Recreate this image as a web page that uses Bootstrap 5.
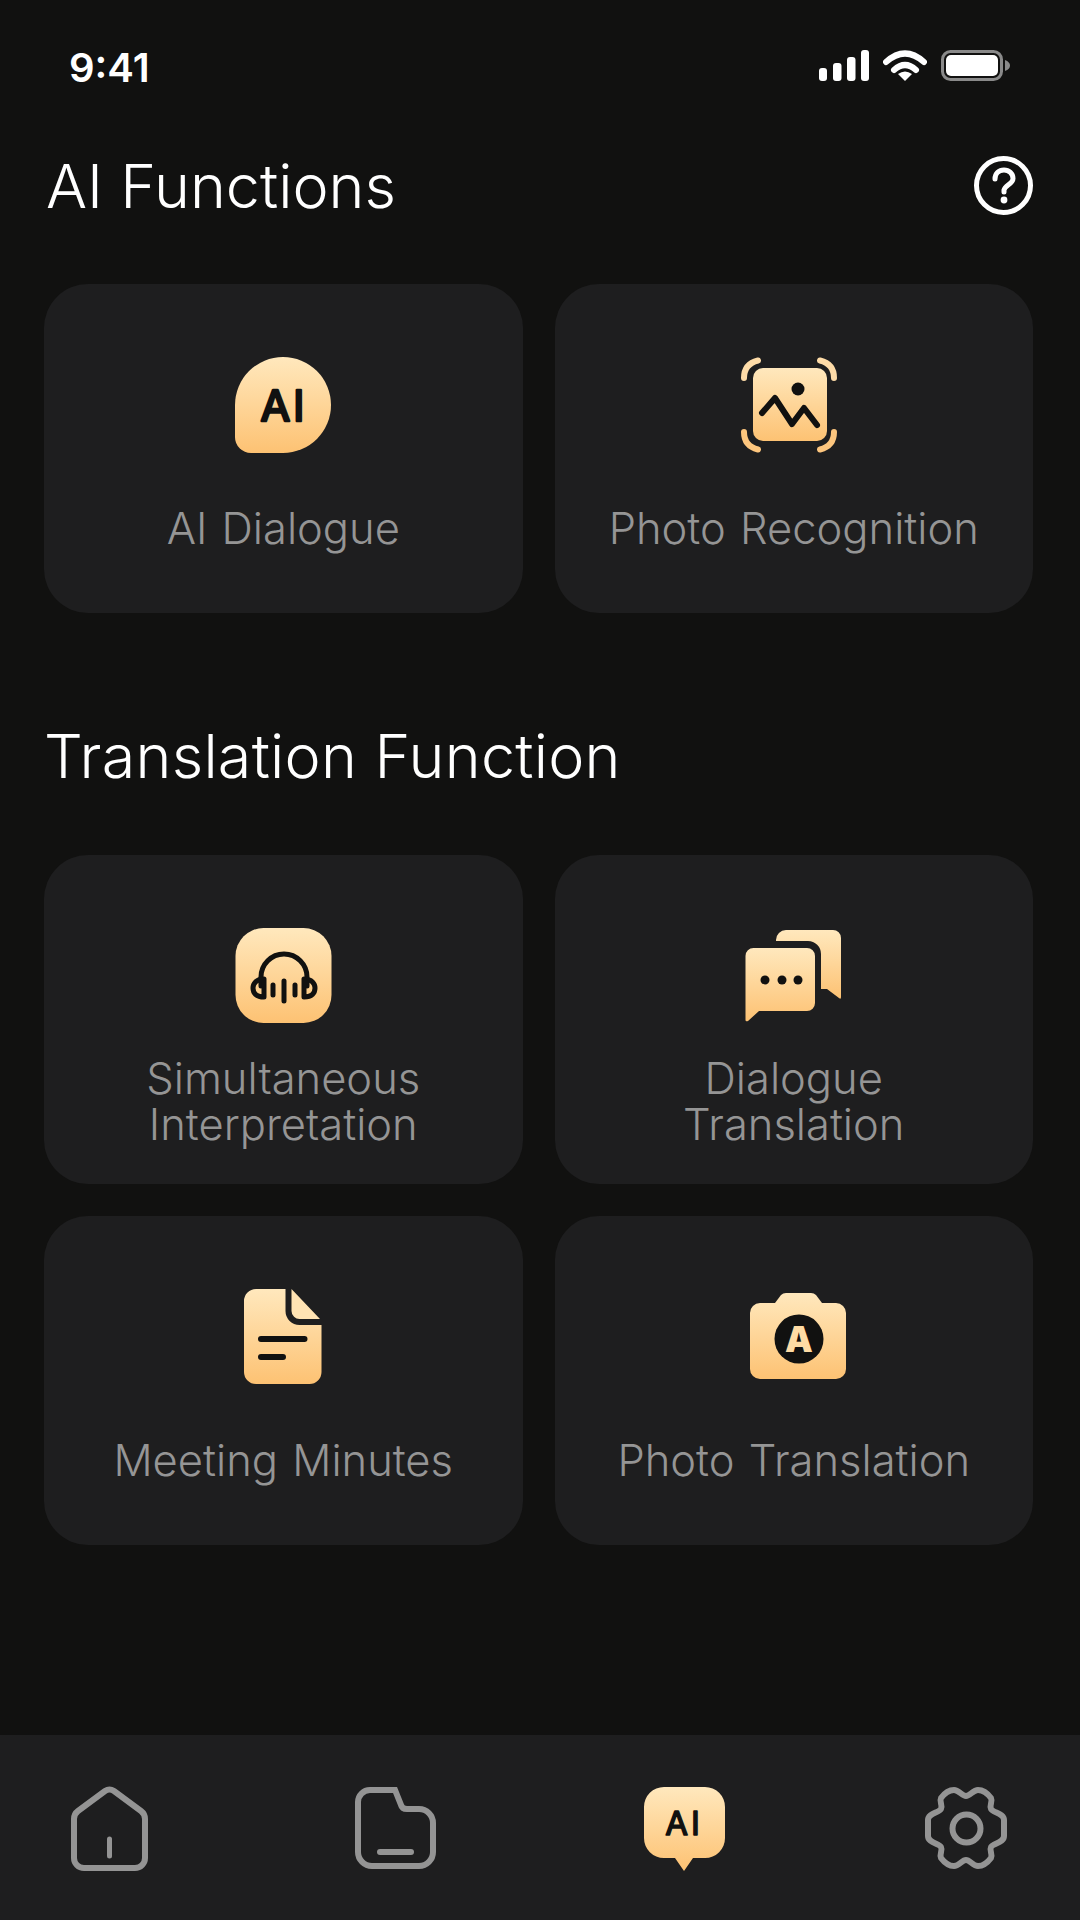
<!DOCTYPE html>
<html lang="en">
<head>
  <meta charset="UTF-8">
  <title>AI Functions</title>
  <link rel="stylesheet" href="https://cdn.jsdelivr.net/npm/bootstrap@5.3.0/dist/css/bootstrap.min.css">
  <style>
    body { background: #111110; font-family: Inter, "Liberation Sans", sans-serif; }
    .screen { width: 1080px; height: 1920px; background: #111110; overflow: hidden; }
    .status-row { padding: 50px 70px 0 69px; height: 131px; color: #fff; }
    .clock { font-size: 40px; font-weight: 600; line-height: 32px; margin-top: 2px; }
    .status-icons { gap: 14px; }
    .main-area { padding: 25px 47px 0 44px; }
    .page-head { height: 59px; padding-left: 2px; }
    .head-text { font-size: 61px; font-weight: 350; line-height: 60px; color: #fff; margin: 0; }
    .section-head { margin-top: 113px; padding-left: 0; }
    .section-head .head-text { letter-spacing: .25px; }
    .fn-grid { display: grid; grid-template-columns: 1fr 1fr; gap: 32px; margin-top: 70px; }
    .fn-grid.first-grid { margin-top: 69px; }
    .fn-card { height: 329px; background: #1e1e1f; border-radius: 44px; padding: 73px 0 10px; }
    .fn-icon { width: 120px; height: 96px; display: block; }
    .fn-label { font-size: 43.5px; line-height: 46px; word-spacing: 2px; font-weight: 350; color: #959595; text-align: center; }
    .tab-row { height: 185px; background: #1e1e1f; padding: 51px 54px 0 50px; }
    .tab-icon { width: 120px; height: 88px; display: block; }
    .ai-mark { font-family: Inter, "Liberation Sans", sans-serif; font-weight: 400; fill: #111110; stroke: #111110; stroke-linejoin: round; letter-spacing: 3px; }
  </style>
</head>
<body>
  <div class="screen d-flex flex-column">
    <div class="status-row d-flex justify-content-between align-items-start flex-shrink-0">
      <div class="clock">9:41</div>
      <div class="status-icons d-flex">
        <svg width="50" height="31" viewBox="0 0 50 31" fill="#fff">
          <rect x="0" y="18" width="8" height="13" rx="3"/>
          <rect x="14" y="13" width="8.5" height="18" rx="3"/>
          <rect x="28" y="7" width="8.5" height="24" rx="3"/>
          <rect x="42" y="0" width="8" height="31" rx="3"/>
        </svg>
        <svg width="44" height="31" viewBox="0 0 44 31" fill="none">
          <path d="M3 12 Q22 -5 41 12" stroke="#fff" stroke-width="6" stroke-linecap="round"/>
          <path d="M11 20 Q22 10 33 20" stroke="#fff" stroke-width="6" stroke-linecap="round"/>
          <path d="M15 24 Q22 19 29 24 L22 31 Z" fill="#fff"/>
        </svg>
        <svg width="69" height="31" viewBox="0 0 69 31" fill="none">
          <rect x="1.5" y="1.5" width="59" height="28" rx="8" stroke="#8a8a8a" stroke-width="3"/>
          <rect x="5" y="5" width="52" height="21" rx="5" fill="#fff"/>
          <path d="M64 10 Q69 12 69 15.5 Q69 19 64 21 Z" fill="#8a8a8a"/>
        </svg>
      </div>
    </div>

    <div class="main-area flex-grow-1">
      <div class="page-head d-flex justify-content-between align-items-center">
        <h1 class="head-text">AI Functions</h1>
        <svg width="59" height="59" viewBox="0 0 59 59" fill="none">
          <circle cx="29.5" cy="29.5" r="27" stroke="#fff" stroke-width="5"/>
          <path d="M21 23 C21 17 25 14 30 14 C35 14 39 17.500 39 22.500 C39 28 31 29 30 34 V36" stroke="#fff" stroke-width="5" stroke-linecap="round"/>
          <circle cx="30" cy="44" r="3.400" fill="#fff"/>
        </svg>
      </div>

      <div class="fn-grid first-grid">
        <div class="fn-card d-flex flex-column align-items-center">
          <svg class="fn-icon" viewBox="0 0 120 96">
            <defs><linearGradient id="g1" x1="0" y1="0" x2="0" y2="1"><stop offset="0" stop-color="#ffe8bd"/><stop offset="1" stop-color="#fdc273"/></linearGradient></defs>
            <path d="M12 48 A48 48 0 1 1 60 96 H28 A16 16 0 0 1 12 80 Z" fill="url(#g1)"/>
            <text class="ai-mark" x="61" y="64" font-size="43" stroke-width="2.500" text-anchor="middle">AI</text>
          </svg>
          <div class="fn-label flex-grow-1 d-flex align-items-center">AI Dialogue</div>
        </div>
        <div class="fn-card d-flex flex-column align-items-center">
          <svg class="fn-icon" viewBox="0 0 120 96" fill="none">
            <defs><linearGradient id="g2" x1="0" y1="0" x2="0" y2="1"><stop offset="0" stop-color="#ffe8bd"/><stop offset="1" stop-color="#fdc273"/></linearGradient></defs>
            <rect x="19" y="11" width="74" height="73" rx="10" fill="url(#g2)"/>
            <path d="M10 21 Q10 7 24 3.500 M86 3.500 Q100 7 100 21" stroke="#fedca8" stroke-width="6" stroke-linecap="round"/>
            <path d="M10 75 Q10 89 24 92.500 M86 92.500 Q100 89 100 75" stroke="#fdc67e" stroke-width="6" stroke-linecap="round"/>
            <circle cx="64" cy="32" r="6.500" fill="#111110"/>
            <path d="M28 56 L41 41 L58 67 L70 51 L83 68" stroke="#111110" stroke-width="6" stroke-linecap="round" stroke-linejoin="round"/>
          </svg>
          <div class="fn-label flex-grow-1 d-flex align-items-center">Photo Recognition</div>
        </div>
      </div>

      <div class="page-head section-head d-flex align-items-center">
        <h2 class="head-text">Translation Function</h2>
      </div>

      <div class="fn-grid">
        <div class="fn-card d-flex flex-column align-items-center">
          <svg class="fn-icon" viewBox="0 0 120 96" fill="none">
            <defs><linearGradient id="g3" x1="0" y1="0" x2="0" y2="1"><stop offset="0" stop-color="#ffe8bd"/><stop offset="1" stop-color="#fdc273"/></linearGradient></defs>
            <rect x="12.500" y="0" width="96" height="95" rx="28" fill="url(#g3)"/>
            <g stroke="#111110" stroke-width="5" stroke-linecap="round" stroke-linejoin="round">
              <path d="M38 58 V49 A23 23 0 0 1 84 49 V58"/>
              <path d="M41 51 C33 51 30 56 30 60 C30 65 33 69 41 69 Z"/>
              <path d="M81 51 C89 51 92 56 92 60 C92 65 89 69 81 69 Z"/>
              <path d="M50 57 V67 M61 53 V73 M72 57 V67"/>
            </g>
          </svg>
          <div class="fn-label flex-grow-1 d-flex align-items-center pt-1">Simultaneous<br>Interpretation</div>
        </div>
        <div class="fn-card d-flex flex-column align-items-center">
          <svg class="fn-icon" viewBox="0 0 120 96">
            <defs><linearGradient id="g4" x1="0" y1="0" x2="0" y2="1"><stop offset="0" stop-color="#ffe8bd"/><stop offset="1" stop-color="#fdc273"/></linearGradient></defs>
            <path d="M42 13 V12 A10 10 0 0 1 52 2 H99 A8 8 0 0 1 107 10 V69 Q107 72 105 70 L93 61 H87 V26 A13 13 0 0 0 74 13 Z" fill="url(#g4)"/>
            <path d="M11.500 28 A8 8 0 0 1 19.500 20 H73 A8 8 0 0 1 81 28 V75 A8 8 0 0 1 73 83 H25 L14 93 Q11.500 94 11.500 92 Z" fill="url(#g4)"/>
            <circle cx="31" cy="52" r="4.500" fill="#111110"/>
            <circle cx="48" cy="52" r="4.500" fill="#111110"/>
            <circle cx="64" cy="52" r="4.500" fill="#111110"/>
          </svg>
          <div class="fn-label flex-grow-1 d-flex align-items-center pt-1">Dialogue<br>Translation</div>
        </div>
        <div class="fn-card d-flex flex-column align-items-center">
          <svg class="fn-icon" viewBox="0 0 120 96" fill="none">
            <defs><linearGradient id="g5" x1="0" y1="0" x2="0" y2="1"><stop offset="0" stop-color="#ffe8bd"/><stop offset="1" stop-color="#fdc273"/></linearGradient></defs>
            <path d="M33 0 H62.500 V22 A14 14 0 0 0 76.500 36 H98.500 V83 A12 12 0 0 1 86.500 95 H33 A12 12 0 0 1 21 83 V12 A12 12 0 0 1 33 0 Z" fill="url(#g5)"/>
            <path d="M68.500 0 L97 30 H77 A8 8 0 0 1 68.500 22 Z" fill="#ffe3b3"/>
            <path d="M38 50 H81.500 M38 68 H60" stroke="#111110" stroke-width="6" stroke-linecap="round"/>
          </svg>
          <div class="fn-label flex-grow-1 d-flex align-items-center">Meeting Minutes</div>
        </div>
        <div class="fn-card d-flex flex-column align-items-center">
          <svg class="fn-icon" viewBox="0 0 120 96">
            <defs><linearGradient id="g6" x1="0" y1="0" x2="0" y2="1"><stop offset="0" stop-color="#ffe8bd"/><stop offset="1" stop-color="#fdc273"/></linearGradient></defs>
            <path d="M26 14 H41 L47 6 Q49 4 52 4 H77 Q80 4 82 6 L88 14 H102 A10 10 0 0 1 112 24 V80 A10 10 0 0 1 102 90 H26 A10 10 0 0 1 16 80 V24 A10 10 0 0 1 26 14 Z" fill="url(#g6)"/>
            <circle cx="65" cy="50" r="24.500" fill="#111110"/>
            <text x="65" y="63" font-size="35" font-weight="900" font-family="Inter, sans-serif" fill="#fedba4" text-anchor="middle">A</text>
          </svg>
          <div class="fn-label flex-grow-1 d-flex align-items-center">Photo Translation</div>
        </div>
      </div>
    </div>

    <div class="tab-row d-flex justify-content-between align-items-start flex-shrink-0">
      <svg class="tab-icon" viewBox="0 0 120 88" fill="none" stroke="#949494" stroke-width="6" stroke-linecap="round">
        <path d="M24 33 Q24 28 28 25 L55 5 Q59.500 2 64 5 L91 25 Q95 28 95 33 V72 A10 10 0 0 1 85 82 H34 A10 10 0 0 1 24 72 Z"/>
        <path d="M59.500 53 V70" stroke-width="5"/>
      </svg>
      <svg class="tab-icon" viewBox="0 0 120 88" fill="none" stroke="#949494" stroke-width="6" stroke-linecap="round">
        <path d="M35 4 H60 L66 19 Q67 23 72 23 H84 A14 14 0 0 1 98 37 V66 A14 14 0 0 1 84 80 H37 A14 14 0 0 1 23 66 V16 A12 12 0 0 1 35 4 Z"/>
        <path d="M45 66 H76"/>
      </svg>
      <svg class="tab-icon" viewBox="0 0 120 88">
        <defs><linearGradient id="g7" x1="0" y1="0" x2="0" y2="1"><stop offset="0" stop-color="#ffe8bd"/><stop offset="1" stop-color="#fdc273"/></linearGradient></defs>
        <path d="M43 1 H84 A20 20 0 0 1 104 21 V52 A20 20 0 0 1 84 72 H72 L63 85 L54 72 H43 A20 20 0 0 1 23 52 V21 A20 20 0 0 1 43 1 Z" fill="url(#g7)"/>
        <text class="ai-mark" x="63" y="49" font-size="33" stroke-width="1.500" text-anchor="middle">AI</text>
      </svg>
      <svg class="tab-icon" viewBox="0 0 120 88" fill="none" stroke="#949494" stroke-width="6">
        <path d="M60 10 C64 10 67 4 72 4 C77 4 82 8 85 12 C87 16 83 19 85 23 C87 27 98 27 98 34 V50 C98 57 87 57 85 61 C83 65 87 68 85 72 C82 76 77 80 72 80 C67 80 64 74 60 74 C56 74 53 80 48 80 C43 80 38 76 35 72 C33 68 37 65 35 61 C33 57 22 57 22 50 V34 C22 27 33 27 35 23 C37 19 33 16 35 12 C38 8 43 4 48 4 C53 4 56 10 60 10 Z"/>
        <circle cx="60.500" cy="42.500" r="14"/>
      </svg>
    </div>
  </div>
  <script src="https://cdn.jsdelivr.net/npm/bootstrap@5.3.0/dist/js/bootstrap.bundle.min.js"></script>
</body>
</html>
